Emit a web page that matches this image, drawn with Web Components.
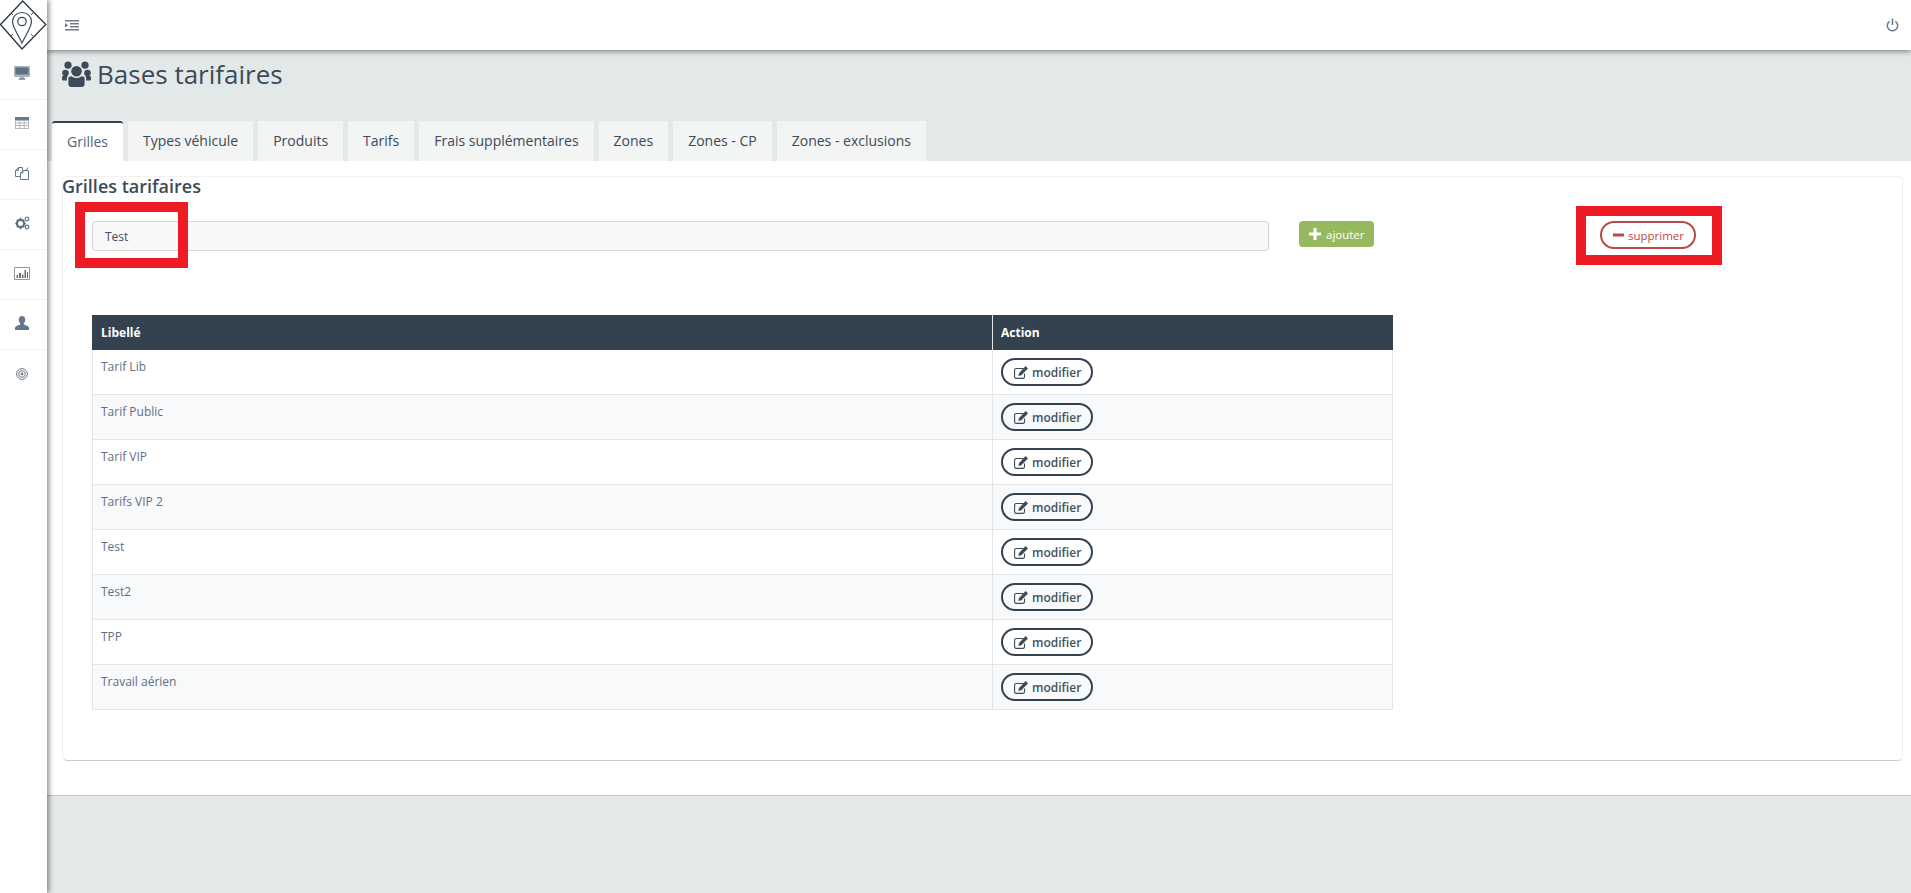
<!DOCTYPE html>
<html lang="fr">
<head>
<meta charset="utf-8">
<title>Bases tarifaires</title>
<style>
  html, body { margin: 0; height: 100%; overflow: hidden; }
  body { font-family: "Open Sans", "Liberation Sans", sans-serif; background: #e3e9e9; color: #3d4a57; }
</style>
</head>
<body>
<app-shell>
  <side-nav slot="side"></side-nav>
  <top-bar slot="top"></top-bar>
  <page-title slot="title">Bases tarifaires</page-title>
  <tab-bar slot="tabs">
    <tab-item active>Grilles</tab-item>
    <tab-item>Types véhicule</tab-item>
    <tab-item>Produits</tab-item>
    <tab-item>Tarifs</tab-item>
    <tab-item>Frais supplémentaires</tab-item>
    <tab-item>Zones</tab-item>
    <tab-item>Zones - CP</tab-item>
    <tab-item>Zones - exclusions</tab-item>
  </tab-bar>
  <grille-card slot="content">
    <grid-table>
      <grid-row label="Tarif Lib"></grid-row>
      <grid-row label="Tarif Public" alt></grid-row>
      <grid-row label="Tarif VIP"></grid-row>
      <grid-row label="Tarifs VIP 2" alt></grid-row>
      <grid-row label="Test"></grid-row>
      <grid-row label="Test2" alt></grid-row>
      <grid-row label="TPP"></grid-row>
      <grid-row label="Travail aérien" alt></grid-row>
    </grid-table>
  </grille-card>
</app-shell>

<script>
const define_el = (nom, html) => {
  class Composant extends HTMLElement {
    constructor() {
      super();
      this.attachShadow({ mode: "open" });
      this.shadowRoot.innerHTML = html(this);
    }
  }
  customElements.define(nom, Composant);
}

const icones = {
  desktop: `<svg width="16" height="14" viewBox="0 0 16 14"><path fill="#a9b3bd" d="M1.200 0h13.600c.7 0 1.200.5 1.200 1.200v8.600c0 .7-.5 1.200-1.200 1.200H10l.3 1.500h1.200v1H4.500v-1h1.200L6 11H1.200C.5 11 0 10.500 0 9.800V1.200C0 .5.500 0 1.200 0z"/><path fill="#5f6f80" d="M1.500 1.500h13v7h-13zM5 12.500h6v1H5z"/></svg>`,
  table: `<svg width="14" height="12" viewBox="0 0 14 12"><path fill="#aeb8c3" d="M0 0h14v12H0z"/><path fill="#fff" d="M1 4h3.300v1.500H1zM5.300 4h3.400v1.500H5.300zM9.700 4H13v1.500H9.700zM1 6.500h3.300V8H1zM5.300 6.500h3.400V8H5.300zM9.700 6.500H13V8H9.700zM1 9h3.300v2H1zM5.300 9h3.400v2H5.300zM9.700 9H13v2H9.700z"/><path fill="#6b7b8c" d="M0 0h14v3H0z"/></svg>`,
  files: `<svg width="14" height="14" viewBox="0 0 14 14"><path fill="none" stroke="#66768a" d="M.5 4.500 3.500 1.500H7.500V4M.5 4.500V10.500H5M3.500 1.500V4.500H.5M7.500 4.500H10.500L13.500 1.500M5.500 7 8 4.500H13.500V13.500H5.500zM8 4.500V7H5.500"/></svg>`,
  cogs: `<svg width="15" height="14" viewBox="0 0 15 14"><circle cx="5.500" cy="7.500" r="3.600" fill="none" stroke="#5f6f80" stroke-width="2.200"/><circle cx="12" cy="3" r="1.800" fill="none" stroke="#6b7b8c" stroke-width="1.300"/><circle cx="12" cy="11" r="1.800" fill="none" stroke="#6b7b8c" stroke-width="1.300"/><path stroke="#5f6f80" stroke-width="1.600" d="M5.500 1.800v1.500M5.500 11.700v1.500M.3 7.500h1.500M9.200 7.500h1.500M1.900 3.900 3 5M8 10l1.100 1.100M1.900 11.100 3 10M8 5l1.100-1.100"/></svg>`,
  chart: `<svg width="16" height="13" viewBox="0 0 16 13"><path fill="none" stroke="#8b98a6" d="M.5.500h15v12H.5z"/><path fill="#5f6f80" d="M2.500 8h1.500v3H2.500zM5 6h2v5H5zM8 7.500h1.500V11H8zM10.500 3H12v8h-1.500zM13 5h1v6h-1z"/></svg>`,
  user: `<svg width="14" height="14" viewBox="0 0 14 14"><path fill="#66768a" d="M7 0c2 0 3.300 1.500 3.300 3.700 0 1.500-.6 2.800-1.500 3.500-.3.900.1 1.300 1.200 1.700 1.900.7 3.500 1.300 4 2.700V14H0v-2.400c.5-1.400 2.100-2 4-2.700 1.100-.4 1.500-.8 1.200-1.700C4.300 6.500 3.700 5.200 3.700 3.700 3.700 1.500 5 0 7 0z"/></svg>`,
  target: `<svg width="12" height="12" viewBox="0 0 12 12"><g fill="none" stroke="#6b7b8c"><circle cx="6" cy="6" r="5.400"/><circle cx="6" cy="6" r="3.300"/></g><circle cx="6" cy="6" r="1.400" fill="#6b7b8c"/></svg>`,
  outdent: `<svg width="14" height="11" viewBox="0 0 14 11"><path fill="#6b7b8c" d="M0 0h14v1.500H0zM5 3h9v1.500H5zM5 6h9v1.500H5zM0 9h14v1.500H0zM0 3l3 2.200L0 7.500z"/></svg>`,
  power: `<svg width="13" height="14" viewBox="0 0 13 14"><path fill="none" stroke="#64778d" stroke-width="1.500" d="M3.600 3.300a5.200 5.200 0 1 0 5.800 0M6.500 0.500v6.500"/></svg>`,
  users: `<svg width="29" height="26" viewBox="0 0 29 26"><g fill="#3d4a57"><circle cx="14.500" cy="10.200" r="5.300"/><circle cx="6" cy="4.200" r="3.600"/><circle cx="23" cy="4.200" r="3.600"/><circle cx="3.500" cy="12" r="3.300"/><circle cx="25.500" cy="12" r="3.300"/><path d="M6.400 17.500c0-1.400 1.600-2.300 3.100-2.300 1.300 1.200 3 1.800 5 1.800s3.700-.6 5-1.800c1.500 0 3.100.9 3.100 2.300V23c0 1.700-1.200 3-3 3H9.400c-1.800 0-3-1.300-3-3z"/><path d="M0 16.500c0-1 .6-1.500 1.500-1.500h4.200C5 16 4.800 17 4.800 18v1.500H1.500C.6 19.500 0 19 0 18zM29 16.500c0-1-.6-1.500-1.500-1.500h-4.200c.7 1 .9 2 .9 3v1.500h3.300c.9 0 1.500-.5 1.500-1.500z"/></g></svg>`,
  edit: `<svg width="14" height="13" viewBox="0 0 14 13"><path fill="none" stroke="#3d4a57" stroke-width="1.100" d="M9.500 2.500H2.300C1.300 2.500.6 3.200.6 4.200v6.500c0 1 .7 1.700 1.700 1.700h6.500c1 0 1.700-.7 1.700-1.700V7.500"/><path fill="#3d4a57" d="M11.600 0 14 2.400 7.300 9.200 4.300 10l.8-3z"/></svg>`,
  plus: `<svg width="12" height="12" viewBox="0 0 12 12"><path fill="#fff" d="M4.500 0h3v4.500H12v3H7.500V12h-3V7.500H0v-3h4.500z"/></svg>`,
  minus: `<svg width="11" height="4" viewBox="0 0 11 4"><path fill="#b94a48" d="M0 .5h11v3H0z"/></svg>`
}

define_el("app-shell", () => /*html*/`
  <style>
    :host { display: flex; height: 893px; background: #e3e9e9; }
    .side { flex: 0 0 47px; position: relative; z-index: 3; background: #fff; box-shadow: 2px 0 5px rgba(0,0,0,.45); }
    .main { flex: 1; min-width: 0; display: flex; flex-direction: column; }
    .top { position: relative; z-index: 2; }
    .tete { height: 71px; }
    .blanc { background: #fff; height: 635px; padding: 16px 8px 0 15px; box-sizing: border-box; border-bottom: 1px solid #c4c8c8; }
  </style>
  <div class="side"><slot name="side"></slot></div>
  <div class="main">
    <div class="top"><slot name="top"></slot></div>
    <div class="tete"><slot name="title"></slot></div>
    <slot name="tabs"></slot>
    <div class="blanc"><slot name="content"></slot></div>
  </div>
`);

define_el("side-nav", () => {
  const lignes = ["desktop","table","files","cogs","chart","user","target"]
    .map(n => `<div class="item">${icones[n]}</div>`).join("");
  return /*html*/`
  <style>
    :host { display: block; }
    .logo { height: 50px; display: block; }
    .item { height: 50px; display: flex; align-items: center; justify-content: center; box-sizing: border-box; border-bottom: 1px solid #f0f1f2; padding: 0 3px 3px 0; }
    .item:last-child { border-bottom: 0; }
  </style>
  <svg class="logo" width="47" height="50" viewBox="0 0 47 50">
    <path fill="none" stroke="#2c3540" stroke-width="1.300" d="M22.700 1 45.800 24.500 22 49 .5 24.500z"/>
    <path fill="none" stroke="#3d4a57" stroke-width="1.200" d="M22 12.500c5.200 0 9.500 4 9.500 9 0 5.500-5.500 13-9.500 21.500-4-8.500-9.500-16-9.500-21.500 0-5 4.300-9 9.500-9z"/>
    <circle cx="22" cy="21.500" r="4.200" fill="none" stroke="#3d4a57" stroke-width="1.200"/>
    <path stroke="#3d4a57" stroke-width="1" d="M33 36l-2-2M11 36l2-2M33 13l-2 2M11 13l2 2"/>
  </svg>
  ${lignes}`;
});

define_el("top-bar", () => /*html*/`
  <style>
    :host { display: flex; height: 50px; align-items: center; justify-content: space-between; background: #fff; padding: 0 12px 0 18px; box-shadow: 0 2px 5px rgba(0,0,0,.4); }
    svg { display: block; }
  </style>
  ${icones.outdent}${icones.power}
`);

define_el("page-title", () => /*html*/`
  <style>
    :host { display: flex; align-items: center; gap: 6px; padding: 9px 0 0 15px; font-size: 26px; line-height: 30px; color: #3d4a57; }
    svg { display: block; }
  </style>
  ${icones.users}<span><slot></slot></span>
`);

define_el("tab-bar", () => /*html*/`
  <style>
    :host { display: flex; gap: 5px; height: 40px; padding-left: 5px; }
  </style>
  <slot></slot>
`);

define_el("tab-item", () => /*html*/`
  <style>
    :host { display: block; box-sizing: border-box; height: 40px; padding: 0 15px; background: #f3f4f4; font-size: 14px; line-height: 39px; color: #3d4a57; white-space: nowrap; }
    :host([active]) { background: #fff; border-top: 2px solid #323f4d; border-radius: 3px 3px 0 0; line-height: 37px; color: #566473; }
  </style>
  <slot></slot>
`);

define_el("grille-card", () => /*html*/`
  <style>
    :host { display: block; position: relative; box-sizing: border-box; height: 585px; margin-top: -1px; background: #fff; border: 1px solid #f1f1f1; border-bottom: 1px solid #ccc; border-radius: 5px; }
    h3 { margin: 0; font-size: 18px; font-weight: 600; line-height: 22px; color: #3d4a57; position: relative; top: -2px; left: -1px; }
    .form { display: flex; align-items: flex-start; margin: 22px 0 0 29px; height: 94px; }
    .champ { box-sizing: border-box; width: 1177px; height: 30px; padding: 0 12px; background: #f8f8f8; border: 1px solid #d3d3d3; border-radius: 4px; font-size: 12px; line-height: 30px; color: #4a4a68; }
    .ajouter { display: flex; align-items: center; gap: 5px; box-sizing: border-box; width: 75px; height: 26px; margin-left: 30px; padding-left: 10px; background: #96b95f; border-radius: 4px; color: #fff; font-size: 11.500px; font-weight: 500; }
    .supprimer { display: flex; align-items: center; gap: 4px; box-sizing: border-box; width: 96px; height: 28px; margin-left: 226px; padding-left: 11px; background: #fff; border: 2px solid #b94a48; border-radius: 14px; color: #b94a48; font-size: 11.500px; font-weight: 500; }
    .table { margin-left: 29px; width: 1301px; }
    .cadre { position: absolute; box-sizing: border-box; border: 10px solid #ed1c24; }
    svg { display: block; }
  </style>
  <h3>Grilles tarifaires</h3>
  <div class="form">
    <div class="champ">Test</div>
    <div class="ajouter">${icones.plus}<span>ajouter</span></div>
    <div class="supprimer">${icones.minus}<span>supprimer</span></div>
  </div>
  <div class="table"><slot></slot></div>
  <div class="cadre" style="left:12px;top:25px;width:113px;height:66px"></div>
  <div class="cadre" style="left:1513px;top:29px;width:146px;height:59px"></div>
`);

define_el("grid-table", () => /*html*/`
  <style>
    :host { display: block; }
    .entete { display: grid; grid-template-columns: 900px 1fr; height: 35px; background: #344250; color: #fff; font-size: 12px; font-weight: 700; line-height: 35px; }
    .entete div { padding-left: 9px; }
    .entete div + div { border-left: 1px solid #e5e5e5; padding-left: 8px; }
  </style>
  <div class="entete"><div>Libellé</div><div>Action</div></div>
  <slot></slot>
`);

define_el("grid-row", (el) => /*html*/`
  <style>
    :host { display: grid; grid-template-columns: 899px 1fr; box-sizing: border-box; height: 45px; border: 1px solid #e3e5e8; border-top: 0; font-size: 12px; color: #5f6f80; background: #fff; }
    :host([alt]) { background: #f8f9fb; }
    .lib { padding: 9px 0 0 8px; line-height: 16px; }
    .act { border-left: 1px solid #e3e5e8; padding: 8px 0 0 8px; }
    .btn { display: flex; align-items: center; gap: 4px; box-sizing: border-box; width: 92px; height: 28px; padding-left: 11px; border: 2px solid #344250; border-radius: 14px; background: #fff; font-size: 12px; font-weight: 600; color: #44525f; }
    :host([alt]) .btn { background: #f8f9fb; }
    svg { display: block; }
  </style>
  <div class="lib">${el.getAttribute("label")}</div>
  <div class="act"><div class="btn">${icones.edit}<span>modifier</span></div></div>
`);
</script>
</body>
</html>
